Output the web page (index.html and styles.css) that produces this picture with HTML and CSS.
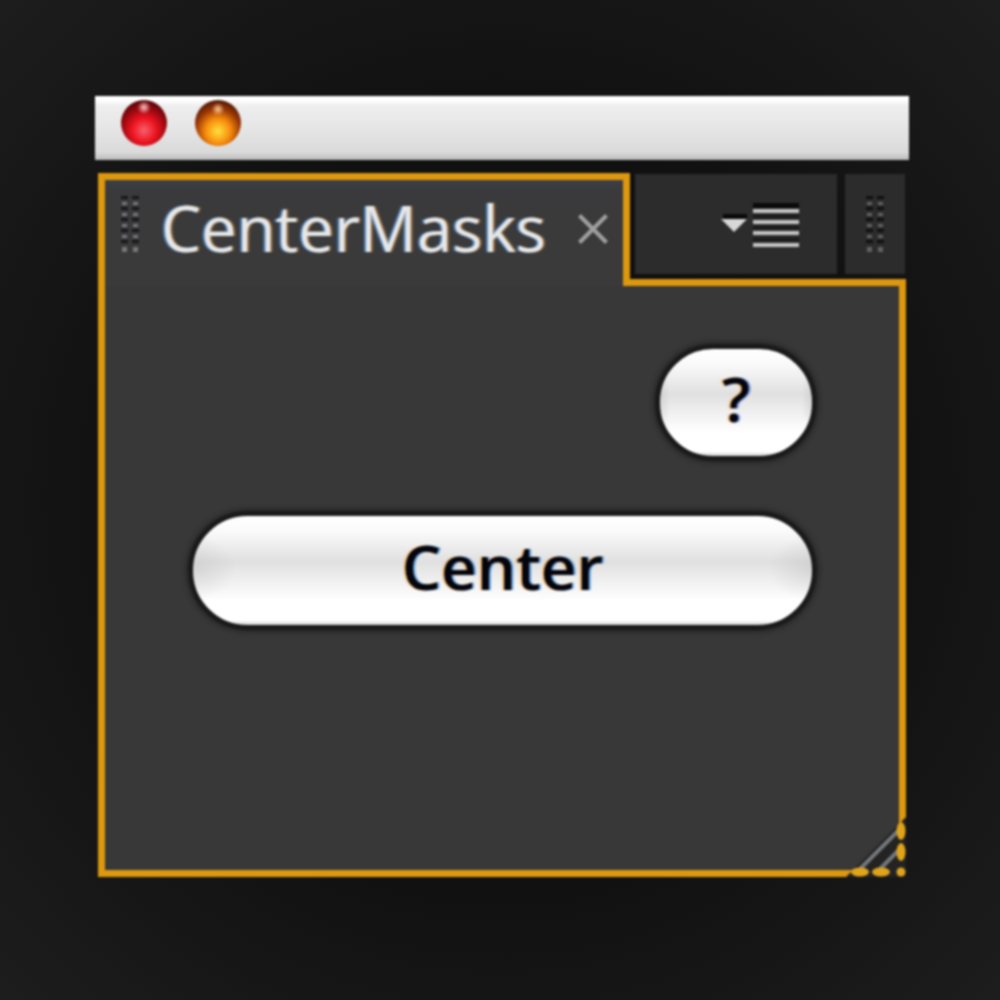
FILE: index.html
```html
<!DOCTYPE html>
<html lang="en">
<head>
<meta charset="utf-8">
<title>CenterMasks</title>
<link rel="stylesheet" href="styles.css">
</head>
<body>
<div class="window">
  <div class="titlebar">
    <span class="light light-red"></span>
    <span class="light light-orange"></span>
  </div>
  <div class="panel">
    <div class="panel-head">
      <div class="tab">
        <svg class="grip" width="20" height="62" viewBox="0 0 20 62">
          <g fill="#17171b"><rect x="1" y="1" width="7" height="3"/><rect x="12" y="1" width="7" height="3"/><rect x="1" y="12" width="7" height="3"/><rect x="12" y="12" width="7" height="3"/><rect x="1" y="23" width="7" height="3"/><rect x="12" y="23" width="7" height="3"/><rect x="1" y="34" width="7" height="3"/><rect x="12" y="34" width="7" height="3"/><rect x="1" y="45" width="7" height="3"/><rect x="12" y="45" width="7" height="3"/></g>
          <g fill="#77777a"><rect x="2" y="7" width="5" height="3"/><rect x="13" y="7" width="5" height="3"/><rect x="2" y="18" width="5" height="3"/><rect x="13" y="18" width="5" height="3"/><rect x="2" y="29" width="5" height="3"/><rect x="13" y="29" width="5" height="3"/><rect x="2" y="40" width="5" height="3"/><rect x="13" y="40" width="5" height="3"/><rect x="2" y="52" width="5" height="5"/><rect x="13" y="52" width="5" height="5"/></g>
        </svg>
        <span class="tab-label">CenterMasks</span>
        <svg class="close" width="30" height="30" viewBox="0 0 30 30"><path d="M1.500 1.500 28.500 28.500M28.500 1.500 1.500 28.500" stroke="#a0a0a0" stroke-width="4" fill="none"/></svg>
      </div>
      <div class="menu-btn">
        <svg width="80" height="52" viewBox="0 0 80 52">
          <rect x="33" y="0" width="46" height="5" fill="#0a0a0a"/>
          <rect x="3" y="11" width="24" height="5" fill="#0a0a0a"/>
          <path d="M1 16H27L14 29Z" fill="#d8d8d8"/>
          <g fill="#c4c4c4"><rect x="33" y="6" width="46" height="4"/><rect x="33" y="17" width="46" height="4"/><rect x="33" y="28" width="46" height="4"/><rect x="33" y="40" width="46" height="4"/></g>
          <g fill="#1a1a1a"><rect x="33" y="12" width="46" height="3"/><rect x="33" y="23" width="46" height="3"/><rect x="33" y="35" width="46" height="3"/></g>
        </svg>
      </div>
      <div class="side-btn">
        <svg width="20" height="62" viewBox="0 0 20 62">
          <g fill="#101012"><rect x="1" y="1" width="7" height="3"/><rect x="12" y="1" width="7" height="3"/><rect x="1" y="12" width="7" height="3"/><rect x="12" y="12" width="7" height="3"/><rect x="1" y="23" width="7" height="3"/><rect x="12" y="23" width="7" height="3"/><rect x="1" y="34" width="7" height="3"/><rect x="12" y="34" width="7" height="3"/><rect x="1" y="45" width="7" height="3"/><rect x="12" y="45" width="7" height="3"/></g>
          <g fill="#626265"><rect x="2" y="7" width="5" height="3"/><rect x="13" y="7" width="5" height="3"/><rect x="2" y="18" width="5" height="3"/><rect x="13" y="18" width="5" height="3"/><rect x="2" y="29" width="5" height="3"/><rect x="13" y="29" width="5" height="3"/><rect x="2" y="40" width="5" height="3"/><rect x="13" y="40" width="5" height="3"/><rect x="2" y="52" width="5" height="5"/><rect x="13" y="52" width="5" height="5"/></g>
        </svg>
      </div>
    </div>
    <div class="panel-body">
      <div class="btn btn-help">?</div>
      <div class="btn btn-center">Center</div>
      <svg class="resize" width="60" height="60" viewBox="0 0 60 60">
        <path d="M0 60 60 0V60Z" fill="#232323"/>
        <path d="M14 52 52 14M34 52 52 34" stroke="#74787c" stroke-width="4" fill="none"/>
        <g fill="#e0a41a"><ellipse cx="14" cy="55" rx="9" ry="4.500"/><ellipse cx="35" cy="55" rx="9" ry="4.500"/><ellipse cx="55" cy="55" rx="4.500" ry="4.500"/><ellipse cx="55" cy="14" rx="4.500" ry="9"/><ellipse cx="55" cy="35" rx="4.500" ry="9"/></g>
      </svg>
    </div>
  </div>
</div>
</body>
</html>
```
FILE: styles.css
```css
* { box-sizing: border-box; }
html, body { margin: 0; height: 100%; }
body {
  background: radial-gradient(circle at 50% 50%, #0f0f0f 0%, #111 55%, #1d1d1d 100%);
  padding: 96px 91px 0 95px;
  font-family: "Open Sans", "Liberation Sans", sans-serif;
}
.window { width: 814px; filter: blur(1.2px); }
.titlebar {
  height: 64px;
  display: flex;
  align-items: center;
  gap: 28px;
  padding: 0 0 11px 26px;
  background: linear-gradient(180deg, #fff 0, #fff 4px, #eee 10px, #e6e6e6 50%, #dadada 88%, #bbb 100%);
}
.light {
  width: 46px; height: 46px;
  border-radius: 50%;
}
.light-red {
  background:
    radial-gradient(circle at 50% 16%, #ffc4c4 0, rgba(255,150,150,0) 15%),
    radial-gradient(circle at 50% 66%, #f8606c 0, #ec1420 32%, #a00810 56%, #3c0406 86%);
}
.light-orange {
  background:
    radial-gradient(circle at 50% 20%, #ffc890 0, rgba(255,190,120,0) 15%),
    radial-gradient(circle at 50% 68%, #ffe040 0, #f88c0c 32%, #983606 58%, #3c1003 86%);
}
.panel { width: 808px; margin: 13px 0 0 3px; }
.panel-head { display: flex; height: 106px; }
.tab {
  position: relative;
  z-index: 1;
  width: 532px;
  height: 113px;
  display: flex;
  align-items: flex-start;
  padding: 15px 0 0 15px;
  background: linear-gradient(180deg, #3c3e46 0, #3a3a3c 12px, #3a3a3a 100%);
  border: 7px solid #dc980e;
  border-bottom: 0;
}
.grip { flex: none; }
.tab-label {
  margin: -10px 0 0 21px;
  font-size: 63.500px;
  line-height: 85px;
  font-weight: 500;
  color: #e6e6e6;
  white-space: nowrap;
  text-shadow: -2px 0 1px rgba(90,170,255,.65), 2px 0 1px rgba(255,170,70,.45);
}
.close { margin: 19px 0 0 32px; flex: none; }
.menu-btn {
  width: 202px;
  height: 100px;
  margin: 1px 0 0 5px;
  display: flex;
  justify-content: flex-end;
  padding: 29px 37px 0 0;
  background: #2c2c2c;
}
.side-btn {
  width: 60px;
  height: 100px;
  margin: 1px 0 0 8px;
  padding: 21px 0 0 20px;
  background: #2c2c2c;
}
.panel-body {
  position: relative;
  height: 598px;
  display: flex;
  flex-direction: column;
  align-items: flex-end;
  gap: 50px;
  padding: 58px 82px 0 0;
  background: #383838;
  border: 7px solid #dc980e;
}
.btn {
  height: 117px;
  border: 5px solid #1a1a1a;
  border-radius: 58px;
  box-shadow: 0 0 5px 2px #262626;
  display: flex;
  align-items: center;
  justify-content: center;
  font-weight: 600;
  font-size: 62px;
  color: #05050d;
  background:
    radial-gradient(ellipse 7% 30% at 0 48%, rgba(190,190,190,.45), rgba(190,190,190,0)),
    radial-gradient(ellipse 7% 30% at 100% 48%, rgba(190,190,190,.45), rgba(190,190,190,0)),
    linear-gradient(180deg, #fff 0, #fafafa 14%, #e0e0e0 42%, #ececec 55%, #fff 78%, #fff 96%, #ccc 100%);
}
.btn-help { width: 162px; padding-bottom: 10px; text-shadow: -2px 0 1px rgba(255,150,20,.55), 2px 0 1px rgba(30,90,220,.6); }
.btn-center { width: 629px; height: 119px; border-radius: 60px; padding-bottom: 10px; text-shadow: -2px 0 1px rgba(255,150,20,.55), 2px 0 1px rgba(0,110,220,.6); }
.resize { position: absolute; right: -7px; bottom: -7px; }
```
